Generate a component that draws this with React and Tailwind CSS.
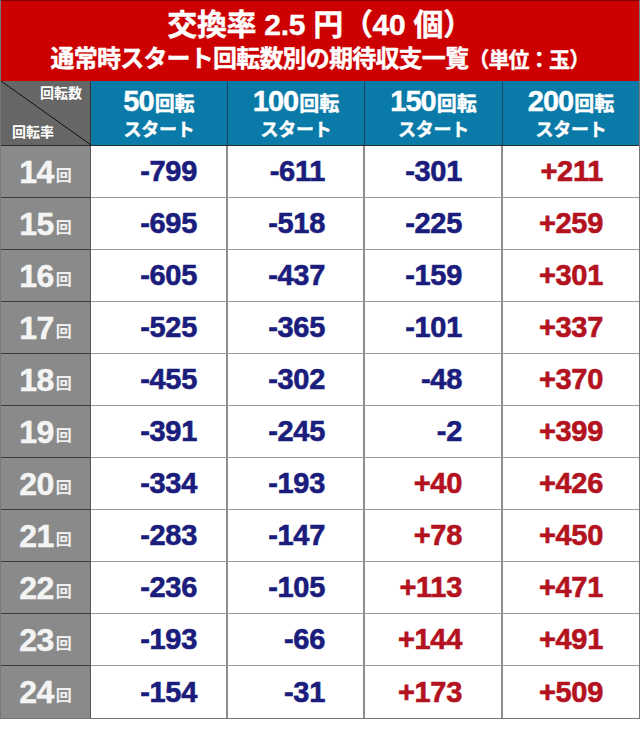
import React from "react";

const rows = [
  ["14", "-799", "-611", "-301", "+211"],
  ["15", "-695", "-518", "-225", "+259"],
  ["16", "-605", "-437", "-159", "+301"],
  ["17", "-525", "-365", "-101", "+337"],
  ["18", "-455", "-302", "-48", "+370"],
  ["19", "-391", "-245", "-2", "+399"],
  ["20", "-334", "-193", "+40", "+426"],
  ["21", "-283", "-147", "+78", "+450"],
  ["22", "-236", "-105", "+113", "+471"],
  ["23", "-193", "-66", "+144", "+491"],
  ["24", "-154", "-31", "+173", "+509"],
];

const padCls = ["pr-[29px]", "pr-[38px]", "pr-[39px]", "pr-[36px]"];
const cols = ["50", "100", "150", "200"];

const FONT = { fontFamily: '"Liberation Sans", "Noto Sans CJK JP", sans-serif' };

export default function App() {
  return (
    <div className="w-[640px] h-[731px] bg-white" style={FONT}>
      <div className="border-l border-r border-b border-[#777] w-[640px]">
        {/* Title */}
        <div className="h-[81px] bg-[#cc0000] border-t border-[#7a0000] flex flex-col items-center text-white font-bold [-webkit-text-stroke:0.4px_white]">
          <div className="mt-[6px] h-[36px] flex items-center text-[30px] leading-none tracking-[-0.3px]">
            <span>交換率 2.5 円（40 個）</span>
          </div>
          <div className="h-[32px] flex items-center leading-none">
            <span className="text-[24px] tracking-[-0.8px]">通常時スタート回転数別の期待収支一覧</span>
            <span className="text-[21px] tracking-[-0.8px]">（単位：玉）</span>
          </div>
        </div>
        {/* Column header */}
        <div className="grid grid-cols-[90px_137px_137px_138px_136px] h-[65px] border-b border-[#2a2a2a]">
          <div className="relative bg-[#666666] border-r border-[#333]">
            <svg className="absolute inset-0" width="90" height="64" viewBox="0 0 90 64">
              <line x1="0" y1="0" x2="90" y2="64" stroke="#111" strokeWidth="1" />
            </svg>
            <div className="absolute right-[8px] top-[2px] text-white font-bold text-[14px] leading-[20px]">回転数</div>
            <div className="absolute left-[11px] bottom-[3px] text-white font-bold text-[14px] leading-[20px]">回転率</div>
          </div>
          {cols.map((c, i) => (
            <div
              key={c}
              className={
                "bg-[#0a7aa8] flex flex-col items-center justify-center text-white font-bold [-webkit-text-stroke:0.4px_white] " +
                (i < 3 ? "border-r border-[#17475e]" : "")
              }
            >
              <div className="flex items-baseline leading-none">
                <span className="text-[29px] tracking-[-1px]">{c}</span>
                <span className="text-[20px] ml-[1px]">回転</span>
              </div>
              <div className="text-[18px] leading-none mt-[5px] tracking-[-0.3px]">スタート</div>
            </div>
          ))}
        </div>
        {/* Data rows */}
        {rows.map((r, ri) => (
          <div
            key={r[0]}
            className="grid grid-cols-[90px_137px_137px_138px_136px] h-[52px]"
          >
            <div
              className={
                "bg-[#8a8a8a] border-r border-[#555] flex items-center justify-center text-[#f4f4f4] font-bold " +
                (ri < rows.length - 1 ? "border-b border-b-[#3c3c3c]" : "")
              }
            >
              <span className="text-[32px] leading-none tracking-[-0.5px] [-webkit-text-stroke:0.5px_#f4f4f4]">{r[0]}</span>
              <span className="text-[16px] leading-none mt-[8px] ml-[2px] text-[#eeeeee]">回</span>
            </div>
            {r.slice(1).map((v, ci) => (
              <div
                key={ci}
                className={
                  "flex items-center justify-end font-bold text-[29px] leading-none tracking-[-0.3px] [-webkit-text-stroke:0.6px_currentColor] " +
                  padCls[ci] +
                  " " +
                  (v.startsWith("+") ? "text-[#b3121f] " : "text-[#1b1d7c] ") +
                  (ci < 3 ? "border-r-2 border-r-[#8e8e8e] " : "") +
                  (ri < rows.length - 1 ? "border-b border-b-[#9a9a9a]" : "")
                }
              >
                {v}
              </div>
            ))}
          </div>
        ))}
      </div>
    </div>
  );
}
